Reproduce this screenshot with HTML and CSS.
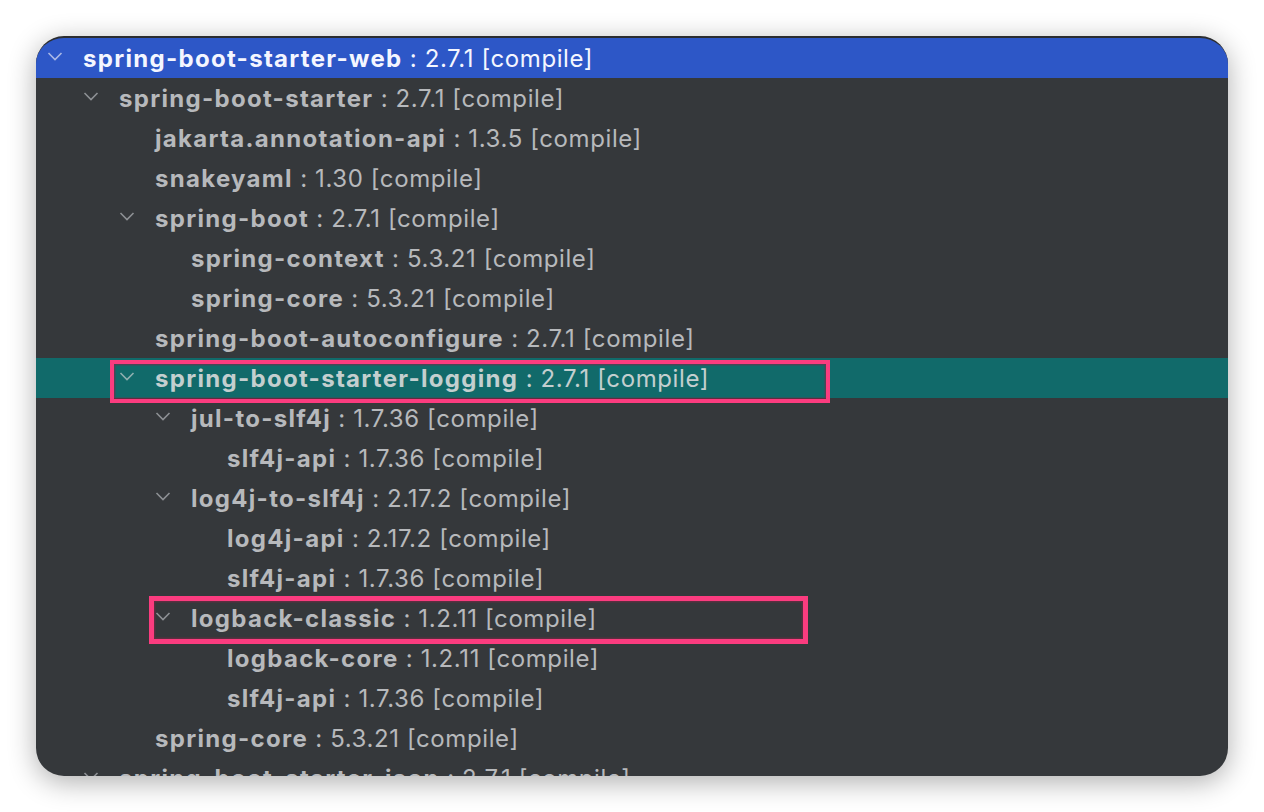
FILE: index.html
```html
<!DOCTYPE html>
<html>
<head>
<meta charset="utf-8">
<link rel="stylesheet" href="styles.css">
</head>
<body>
<div class="stage">
  <div class="panel">
    <div class="tree">
      <div class="row sel l0"><span class="chev"><svg viewBox="0 0 16 9" width="16" height="9"><polyline points="1.5,1 8,7.5 14.5,1"/></svg></span><b>spring-boot-starter-web</b>&nbsp;: 2.7.1 [compile]</div>
      <div class="row l1"><span class="chev"><svg viewBox="0 0 16 9" width="16" height="9"><polyline points="1.5,1 8,7.5 14.5,1"/></svg></span><b>spring-boot-starter</b>&nbsp;: 2.7.1 [compile]</div>
      <div class="row l2"><span class="chev"></span><b>jakarta.annotation-api</b>&nbsp;: 1.3.5 [compile]</div>
      <div class="row l2"><span class="chev"></span><b>snakeyaml</b>&nbsp;: 1.30 [compile]</div>
      <div class="row l2"><span class="chev"><svg viewBox="0 0 16 9" width="16" height="9"><polyline points="1.5,1 8,7.5 14.5,1"/></svg></span><b>spring-boot</b>&nbsp;: 2.7.1 [compile]</div>
      <div class="row l3"><span class="chev"></span><b>spring-context</b>&nbsp;: 5.3.21 [compile]</div>
      <div class="row l3"><span class="chev"></span><b>spring-core</b>&nbsp;: 5.3.21 [compile]</div>
      <div class="row l2"><span class="chev"></span><b>spring-boot-autoconfigure</b>&nbsp;: 2.7.1 [compile]</div>
      <div class="row hl l2"><span class="chev"><svg viewBox="0 0 16 9" width="16" height="9"><polyline points="1.5,1 8,7.5 14.5,1"/></svg></span><b>spring-boot-starter-logging</b>&nbsp;: 2.7.1 [compile]</div>
      <div class="row l3"><span class="chev"><svg viewBox="0 0 16 9" width="16" height="9"><polyline points="1.5,1 8,7.5 14.5,1"/></svg></span><b>jul-to-slf4j</b>&nbsp;: 1.7.36 [compile]</div>
      <div class="row l4"><span class="chev"></span><b>slf4j-api</b>&nbsp;: 1.7.36 [compile]</div>
      <div class="row l3"><span class="chev"><svg viewBox="0 0 16 9" width="16" height="9"><polyline points="1.5,1 8,7.5 14.5,1"/></svg></span><b>log4j-to-slf4j</b>&nbsp;: 2.17.2 [compile]</div>
      <div class="row l4"><span class="chev"></span><b>log4j-api</b>&nbsp;: 2.17.2 [compile]</div>
      <div class="row l4"><span class="chev"></span><b>slf4j-api</b>&nbsp;: 1.7.36 [compile]</div>
      <div class="row l3"><span class="chev"><svg viewBox="0 0 16 9" width="16" height="9"><polyline points="1.5,1 8,7.5 14.5,1"/></svg></span><b>logback-classic</b>&nbsp;: 1.2.11 [compile]</div>
      <div class="row l4"><span class="chev"></span><b>logback-core</b>&nbsp;: 1.2.11 [compile]</div>
      <div class="row l4"><span class="chev"></span><b>slf4j-api</b>&nbsp;: 1.7.36 [compile]</div>
      <div class="row l2"><span class="chev"></span><b>spring-core</b>&nbsp;: 5.3.21 [compile]</div>
      <div class="row l1"><span class="chev"><svg viewBox="0 0 16 9" width="16" height="9"><polyline points="1.5,1 8,7.5 14.5,1"/></svg></span><b>spring-boot-starter-json</b>&nbsp;: 2.7.1 [compile]</div>
    </div>
    <div class="mark mark-logging"></div>
    <div class="mark mark-logback"></div>
  </div>
</div>
</body>
</html>
```
FILE: styles.css
```css
html, body {
  margin: 0;
  padding: 0;
  background: #ffffff;
}
.stage {
  padding: 36px;
  width: 1192px;
}
.panel {
  position: relative;
  width: 1192px;
  height: 740px;
  border-radius: 28px;
  overflow: hidden;
  background: #35383b;
  border-top: 2px solid #2b2d30;
  box-sizing: border-box;
  box-shadow: 0 6px 28px rgba(0, 0, 0, 0.32);
}
.tree {
  display: flex;
  flex-direction: column;
  font-family: "Inter", "Liberation Sans", sans-serif;
  font-size: 24px;
  letter-spacing: 0.6px;
  color: #b7b9bc;
}
.row {
  height: 40px;
  display: flex;
  align-items: center;
  white-space: nowrap;
  padding-left: 11px;
}
.row b {
  font-weight: 700;
  letter-spacing: 1.3px;
}
.row.l1 { padding-left: 47px; }
.row.l2 { padding-left: 83px; }
.row.l3 { padding-left: 119px; }
.row.l4 { padding-left: 155px; }
.chev {
  width: 36px;
  flex: 0 0 36px;
  display: flex;
  align-items: center;
  height: 40px;
  margin-top: -3px;
}
.chev svg polyline {
  fill: none;
  stroke: #8d9094;
  stroke-width: 1.6;
}
.sel {
  background: #2d57c7;
  color: #f4f6ff;
}
.sel .chev svg polyline {
  stroke: #a9b8e6;
}
.hl {
  background: #116a6a;
  color: #c3cfcf;
}
.hl .chev svg polyline {
  stroke: #8fb0b0;
}
.mark {
  position: absolute;
  border: 4px solid #fb3c7f;
  box-shadow: inset 0 0 0 1.5px rgba(120, 40, 70, 0.55);
  box-sizing: border-box;
}
.mark-logging {
  left: 74px;
  top: 322px;
  width: 720px;
  height: 43px;
}
.mark-logback {
  left: 113px;
  top: 558px;
  width: 659px;
  height: 48px;
  border-width: 5px;
}
```
